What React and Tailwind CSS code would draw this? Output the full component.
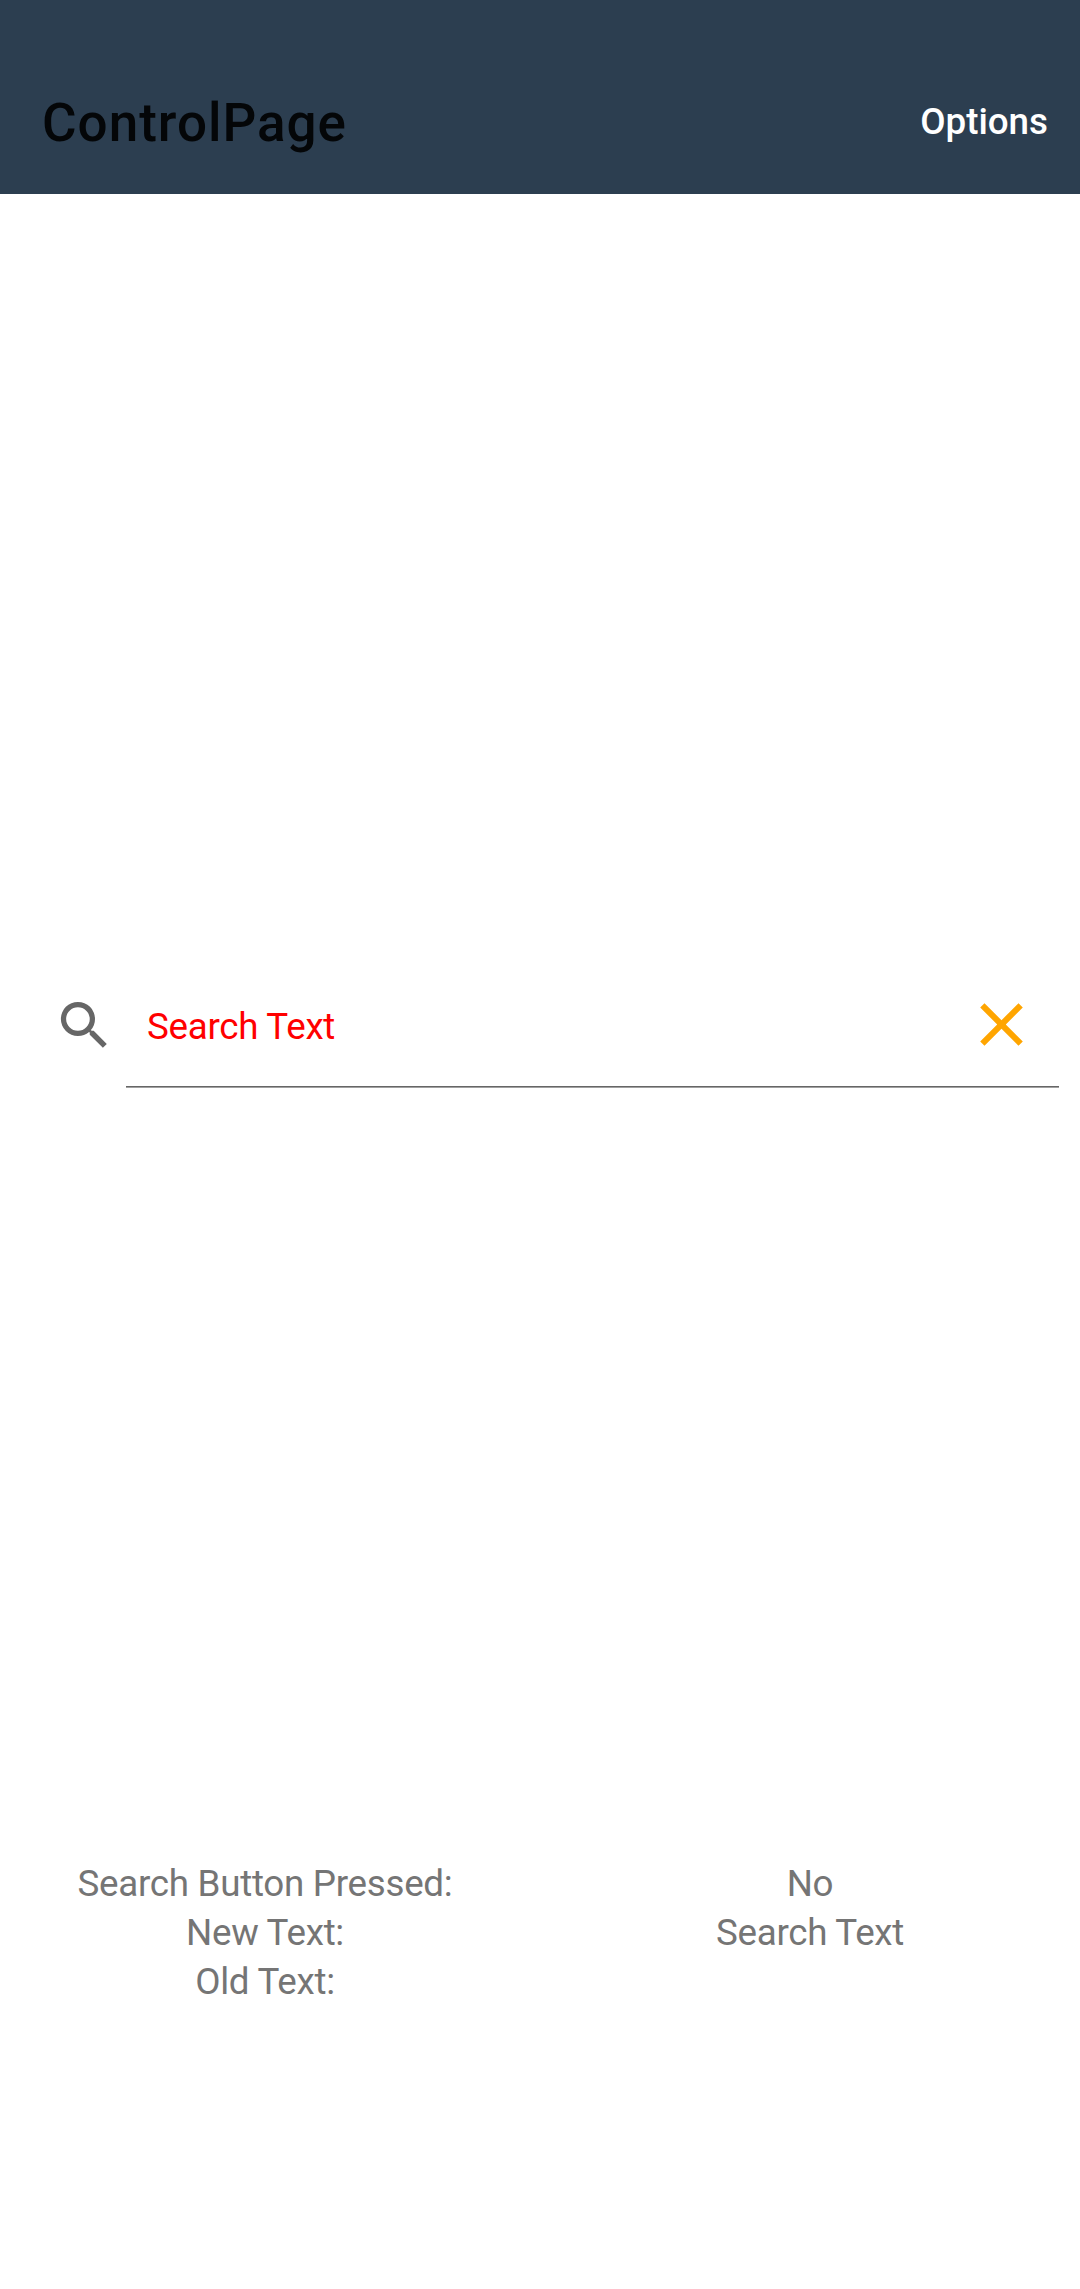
export default function App() {
  return (
    <div className="flex h-[2289px] w-[1080px] flex-col bg-white font-['Roboto',sans-serif] text-[36.75px] text-[#757575]">
      <header className="flex h-[194px] items-center justify-between bg-[#2c3e50] pt-[50px] pr-8 pl-[42px]">
        <h1 className="pt-[4px] text-[53px] font-medium tracking-[1px] text-[#040608]">ControlPage</h1>
        <button className="text-[36.75px] font-medium text-white">Options</button>
      </header>
      <main className="flex flex-1 flex-col">
        <div className="mt-[766px] flex h-[128px] items-center pr-[21px] pl-[53px]">
          <svg viewBox="0 0 24 24" className="mt-[3px] mr-[10px] size-[63px]" fill="#666666">
            <path d="M15.5 14h-.79l-.28-.27A6.471 6.471 0 0 0 16 9.500 6.500 6.500 0 1 0 9.500 16c1.610 0 3.090-.59 4.230-1.570l.27.28v.79l5 4.990L20.490 19l-4.990-5zm-6 0C7.010 14 5 11.990 5 9.500S7.010 5 9.500 5 14 7.010 14 9.500 11.990 14 9.500 14z" />
          </svg>
          <div className="flex h-full flex-1 flex-col">
            <div className="flex flex-1 items-center justify-between pr-[21px] pl-[21px]">
              <span className="pt-[8px] tracking-[-0.28px] text-[#ff0000]">Search Text</span>
              <svg viewBox="0 0 24 24" className="mt-[2px] size-[73px]" fill="#ffa500">
                <path d="M19 6.410L17.590 5 12 10.590 6.410 5 5 6.410 10.590 12 5 17.590 6.410 19 12 13.410 17.590 19 19 17.590 13.410 12z" />
              </svg>
            </div>
            <div className="h-[2px] border-b border-[#a0a0a0] bg-[#666666]" />
          </div>
        </div>
        <div className="mt-[771px] grid grid-cols-[530px_540px] gap-x-[10px] text-center leading-[49px] tracking-[-0.28px]">
          <div>
            <p>Search Button Pressed:</p>
            <p>New Text:</p>
            <p>Old Text:</p>
          </div>
          <div>
            <p>No</p>
            <p>Search Text</p>
          </div>
        </div>
      </main>
    </div>
  );
}
